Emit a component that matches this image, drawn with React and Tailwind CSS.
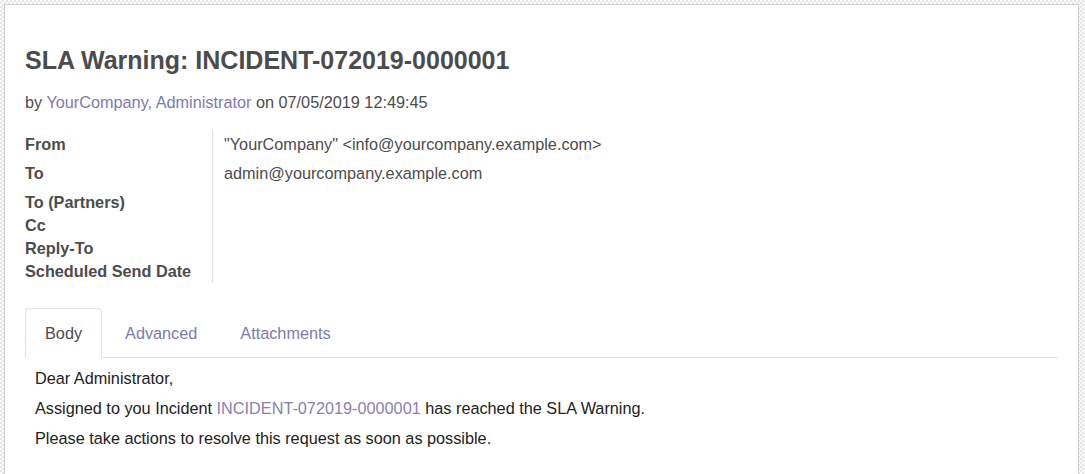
import React from 'react';

const fields = [
  { label: 'From', value: '"YourCompany" <info@yourcompany.example.com>', h: 'h-[29px]' },
  { label: 'To', value: 'admin@yourcompany.example.com', h: 'h-[29px]' },
  { label: 'To (Partners)', value: '', h: 'h-[26px] pt-[3px]' },
  { label: 'Cc', value: '', h: 'h-[23px]' },
  { label: 'Reply-To', value: '', h: 'h-[23px]' },
  { label: 'Scheduled Send Date', value: '', h: 'h-[23px]' },
];

const tabs = ['Body', 'Advanced', 'Attachments'];

export default function App() {
  return (
    <div className="h-[474px] overflow-hidden pt-[4px] pl-[4px] pr-[6px] bg-[image:repeating-conic-gradient(#e6e6e6_0_25%,#fbfbfb_0_50%)] bg-[length:4px_4px] font-['Liberation_Sans',Arial,sans-serif] text-[#4c4c4c]">
      <div className="h-[480px] bg-white border border-b-0 border-[#cfcfd8] pl-[20px] pr-[20px] pt-[41px]">
        {/* title */}
        <h1 className="text-[25px] leading-[29px] font-bold">SLA Warning: INCIDENT-072019-0000001</h1>
        <div className="mt-[16px] text-[16.25px] leading-[23px]">
          by <span className="text-[#7c7bad]">YourCompany, Administrator</span> on 07/05/2019 12:49:45
        </div>

        {/* header fields */}
        <div className="mt-[16px] flex">
          <div className="w-[188px] border-r border-[#dee2e6]">
            {fields.map(f => (
              <div key={f.label} className={`${f.h} flex items-center text-[16.25px] font-bold`}>
                {f.label}
              </div>
            ))}
          </div>
          <div className="pl-[11px]">
            {fields.map(f => (
              <div key={f.label} className={`${f.h} flex items-center text-[16.25px]`}>
                {f.value}
              </div>
            ))}
          </div>
        </div>

        {/* tabs */}
        <div className="mt-[25px] flex border-b border-[#dee2e6] text-[16.25px]">
          {tabs.map((t, i) => (
            <div
              key={t}
              className={
                i === 0
                  ? 'h-[50px] -mb-px mr-[3px] px-[19px] pt-[1px] flex items-center border border-[#dee2e6] border-b-white bg-white rounded-t-[4px]'
                  : 'h-[50px] -mb-px mr-[3px] px-[19px] pt-[1px] flex items-center border border-transparent text-[#7c7bad]'
              }
            >
              {t}
            </div>
          ))}
        </div>

        {/* body */}
        <div className="pt-[5px] pl-[10px] text-[16.25px] leading-[30px] text-[#222]">
          <p>Dear Administrator,</p>
          <p>
            Assigned to you Incident <span className="text-[#8a7fb3]">INCIDENT-072019-0000001</span> has reached the SLA Warning.
          </p>
          <p>Please take actions to resolve this request as soon as possible.</p>
        </div>
      </div>
    </div>
  );
}
